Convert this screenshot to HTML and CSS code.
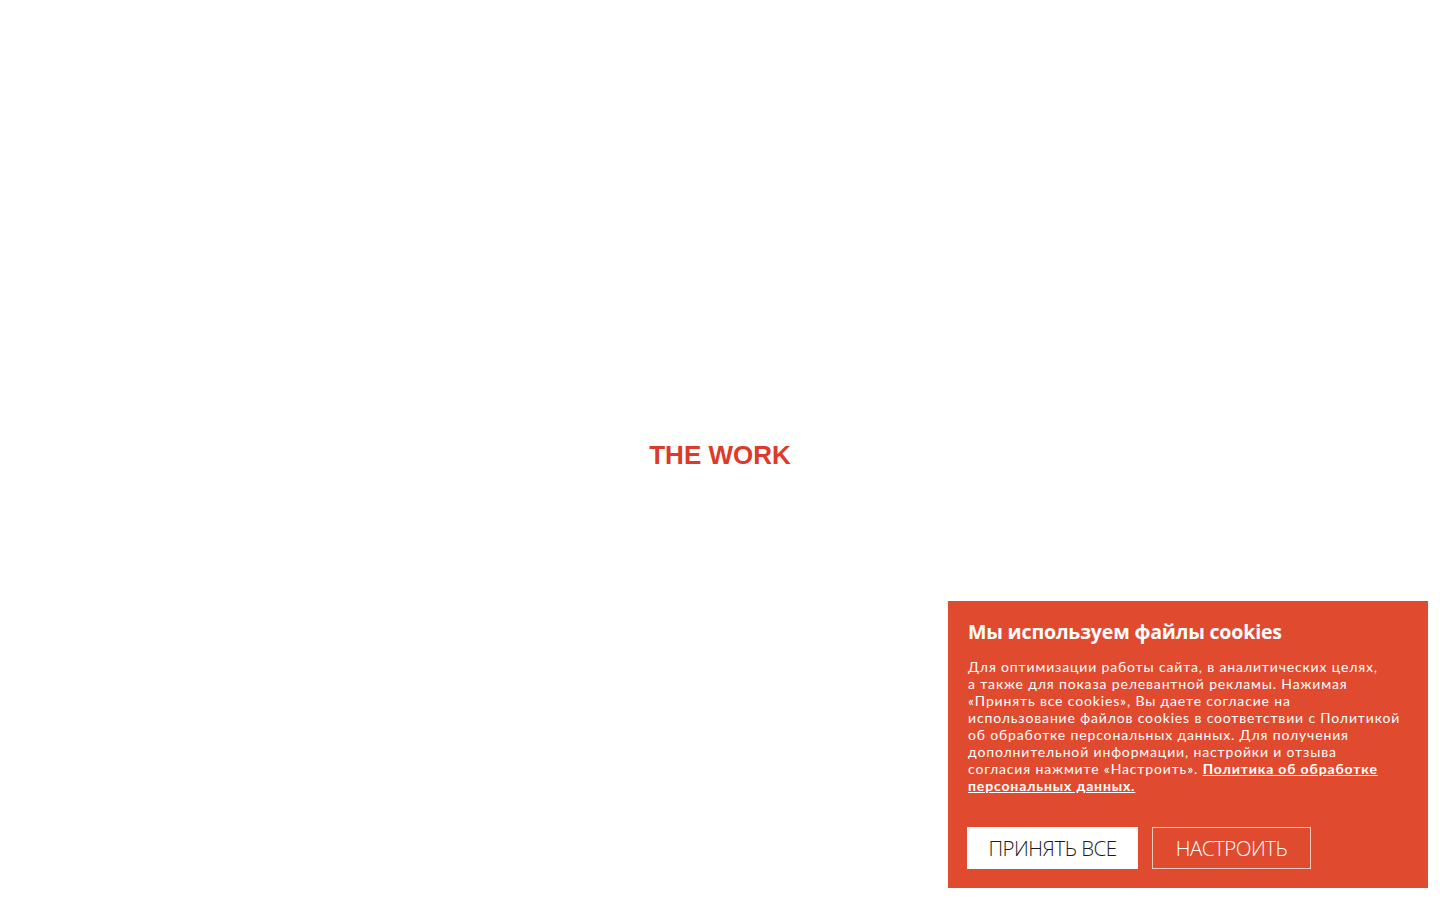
FILE: index.html
```html
<!DOCTYPE html>
<html lang="ru">
<head>
<meta charset="utf-8">
<title>The Work</title>
<link rel="stylesheet" href="styles.css">
</head>
<body>
<main class="stage">
  <h1 class="brand">THE WORK</h1>
</main>
<aside class="cookie">
  <h2 class="cookie-title">Мы используем файлы cookies</h2>
  <p class="cookie-text">Для оптимизации работы сайта, в аналитических целях,<br>а&nbsp;также для показа релевантной рекламы. Нажимая<br>«Принять все cookies», Вы даете согласие на<br>использование файлов cookies в соответствии с Политикой<br>об обработке персональных данных. Для получения<br>дополнительной информации, настройки и отзыва<br>согласия нажмите «Настроить». <a class="cookie-link" href="#">Политика об обработке<br>персональных данных.</a></p>
  <div class="cookie-actions">
    <button class="btn btn-solid" type="button">ПРИНЯТЬ ВСЕ</button>
    <button class="btn btn-outline" type="button">НАСТРОИТЬ</button>
  </div>
</aside>
</body>
</html>
```
FILE: styles.css
```css
* { box-sizing: border-box; }
html, body { margin: 0; padding: 0; background: #ffffff; }
body { font-family: "Liberation Sans", Arial, sans-serif; }

.stage {
  min-height: 100vh;
  display: flex;
  align-items: center;
  justify-content: center;
  padding-top: 10px;
}
.brand {
  margin: 0;
  font-family: "Liberation Sans", Arial, sans-serif;
  font-weight: 700;
  font-size: 26px;
  line-height: 1;
  color: #dc3a2a;
}

.cookie {
  position: fixed;
  right: 12px;
  bottom: 12px;
  width: 480px;
  height: 287px;
  background: #e04a2f;
  color: #ffffff;
  padding: 18px 12px 19px 20px;
  display: flex;
  flex-direction: column;
  font-family: Lato, "Open Sans", sans-serif;
}
.cookie-title {
  margin: 0;
  font-family: "Open Sans", sans-serif;
  font-weight: 700;
  font-size: 19.6px;
  line-height: 26px;
  letter-spacing: -0.2px;
}
.cookie-text {
  margin: 13px 0 0 0;
  font-family: Lato, sans-serif;
  font-size: 14px;
  line-height: 17px;
  font-weight: 400;
  letter-spacing: 0.85px;
  white-space: nowrap;
}
.cookie-link {
  color: #ffffff;
  font-weight: 700;
  letter-spacing: 0.85px;
  text-decoration: underline;
}
.cookie-actions {
  margin-top: auto;
  display: flex;
  gap: 14px;
}
.btn {
  height: 42px;
  padding: 0;
  font-family: "Open Sans", sans-serif;
  font-size: 20.5px;
  font-weight: 300;
  letter-spacing: -0.5px;
  border: 1px solid #ffffff;
  cursor: pointer;
  border-radius: 0;
  text-align: center;
}
.btn-solid {
  width: 171px;
  background: #ffffff;
  color: #1a1a1a;
  margin-left: -1px;
}
.btn-outline {
  width: 159px;
  background: transparent;
  color: #ffffff;
  border-color: #f4c7bd;
}
```
